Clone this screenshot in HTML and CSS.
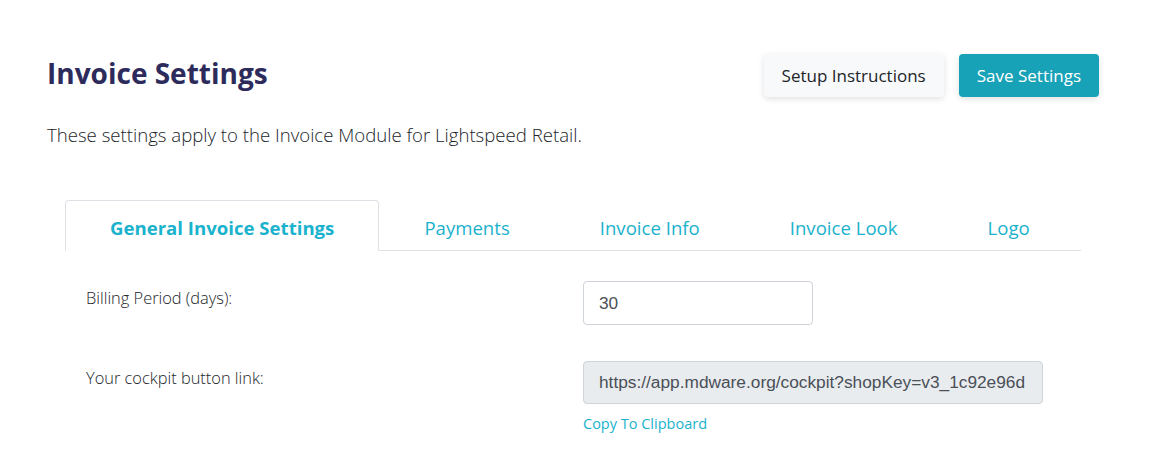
FILE: index.html
```html
<!DOCTYPE html>
<html lang="en">
<head>
    <meta charset="UTF-8">
    <meta name="viewport" content="width=device-width, initial-scale=1.0">
    <title>Invoice Settings</title>
    <link rel="stylesheet" href="styles.css">
</head>
<body>
    <div class="page">
        <div class="header">
            <h1>Invoice Settings</h1>
            <div class="actions">
                <button class="btn btn-light">Setup Instructions</button>
                <button class="btn btn-info">Save Settings</button>
            </div>
        </div>
        <p class="lead">These settings apply to the Invoice Module for Lightspeed Retail.</p>

        <div class="card">
            <ul class="tabs">
                <li class="tab active">General Invoice Settings</li>
                <li class="tab">Payments</li>
                <li class="tab">Invoice Info</li>
                <li class="tab">Invoice Look</li>
                <li class="tab">Logo</li>
            </ul>

            <div class="tab-body">
                <div class="row">
                    <label class="row-label" for="billing">Billing Period (days):</label>
                    <div class="row-field">
                        <input type="text" id="billing" class="input input-short" value="30">
                    </div>
                </div>
                <div class="row">
                    <label class="row-label" for="cockpit">Your cockpit button link:</label>
                    <div class="row-field">
                        <input type="text" id="cockpit" class="input input-long" value="https://app.mdware.org/cockpit?shopKey=v3_1c92e96d" readonly>
                        <a href="#" class="copy-link">Copy To Clipboard</a>
                    </div>
                </div>
            </div>
        </div>
    </div>
</body>
</html>
```

FILE: styles.css
```css
body {
    margin: 0;
    font-family: "Open Sans", "Noto Sans", sans-serif;
    color: #212529;
    background-color: white;
}
.page {
    padding: 54px 61px 0 47px;
}
.header {
    display: flex;
    justify-content: space-between;
    align-items: center;
}
h1 {
    margin: 0 0 5px;
    font-size: 28px;
    font-weight: 700;
    color: #2d2b5c;
}
.actions {
    display: flex;
    gap: 15px;
}
.btn {
    height: 43px;
    padding: 0 18px;
    border: none;
    border-radius: 4px;
    font-family: inherit;
    font-size: 17px;
    cursor: pointer;
}
.btn-light {
    background-color: #f8f9fa;
    color: #212529;
    box-shadow: 0 2px 6px rgba(0, 0, 0, 0.12);
}
.btn-info {
    background-color: #17a2b8;
    color: white;
    box-shadow: 0 2px 6px rgba(0, 0, 0, 0.12);
}
.lead {
    margin: 25px 0 0;
    font-size: 18.6px;
    font-weight: 300;
    color: #212529;
}
.card {
    margin: 53px 18px 0 18px;
}
.tabs {
    display: flex;
    margin: 0;
    padding: 0;
    list-style: none;
    border-bottom: 1px solid #dee2e6;
}
.tab {
    height: 51px;
    box-sizing: border-box;
    padding: 3px 44px 0;
    display: flex;
    align-items: center;
    font-size: 18.6px;
    color: #1ab2cd;
    border: 1px solid transparent;
    border-radius: 4px 4px 0 0;
    margin-bottom: -1px;
    cursor: pointer;
}
.tab.active {
    font-weight: 700;
    background-color: white;
    border-color: #dee2e6 #dee2e6 white;
}
.tab-body {
    padding: 30px 0 0 21px;
    display: flex;
    flex-direction: column;
    gap: 36px;
}
.row {
    display: flex;
    align-items: flex-start;
}
.row-label {
    width: 497px;
    padding-top: 5px;
    font-size: 16.4px;
    font-weight: 300;
    color: #212529;
}
.row-field {
    display: flex;
    flex-direction: column;
    gap: 10px;
}
.input {
    box-sizing: border-box;
    height: 44px;
    padding: 0 15px;
    border: 1px solid #ced4da;
    border-radius: 4px;
    font-family: "Liberation Sans", Arial, sans-serif;
    font-size: 17.3px;
    color: #495057;
    background-color: white;
}
.input-short {
    width: 230px;
}
.input-long {
    width: 460px;
    height: 43px;
    background-color: #e9ecef;
}
.copy-link {
    font-size: 14.5px;
    color: #1ab2cd;
    text-decoration: none;
}
```
